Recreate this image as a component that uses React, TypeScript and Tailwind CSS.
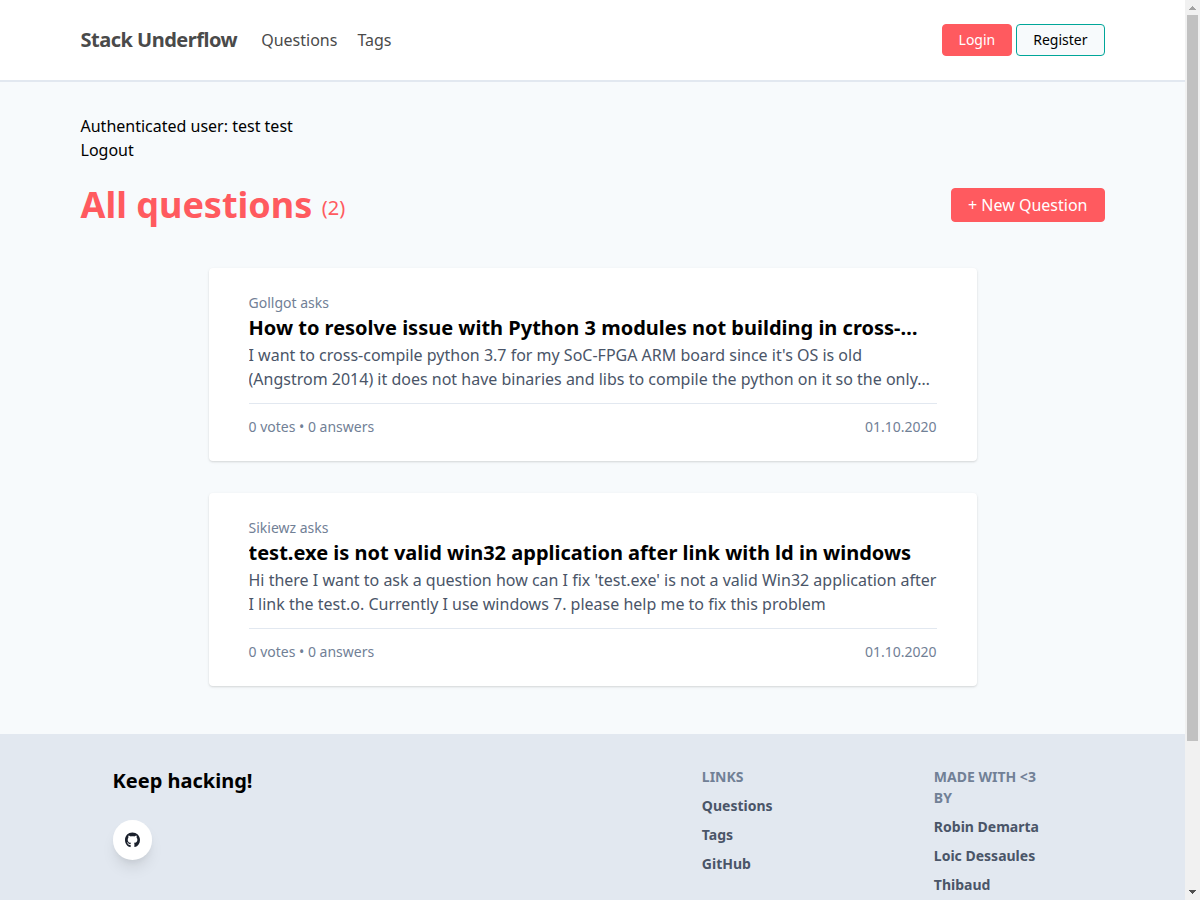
import { useState } from "react";
import type { UIEvent } from "react";
import { FaGithub } from "react-icons/fa";

type Question = {
  author: string;
  title: string;
  body: string;
  votes: number;
  answers: number;
  date: string;
};

const questions: Question[] = [
  {
    author: "Gollgot",
    title: "How to resolve issue with Python 3 modules not building in cross-…",
    body: "I want to cross-compile python 3.7 for my SoC-FPGA ARM board since it's OS is old (Angstrom 2014) it does not have binaries and libs to compile the python on it so the only…",
    votes: 0,
    answers: 0,
    date: "01.10.2020",
  },
  {
    author: "Sikiewz",
    title: "test.exe is not valid win32 application after link with ld in windows",
    body: "Hi there I want to ask a question how can I fix 'test.exe' is not a valid Win32 application after I link the test.o. Currently I use windows 7. please help me to fix this problem",
    votes: 0,
    answers: 0,
    date: "01.10.2020",
  },
];

function Header() {
  return (
    <header className="border-b-2 border-[#e2e8f0] bg-white">
      <nav className="mx-auto flex h-20 max-w-5xl items-center text-[#4a4a4a]">
        <a href="#" className="mr-6 text-xl font-bold tracking-tight">
          Stack Underflow
        </a>
        <div className="flex grow gap-5">
          <a href="#questions">Questions</a>
          <a href="#tags">Tags</a>
        </div>
        <div className="flex gap-1 text-sm leading-none">
          <a href="#login" className="rounded border border-[#ff5a5f] bg-[#ff5a5f] px-4 py-2 leading-none text-white">
            Login
          </a>
          <a href="#register" className="rounded border border-[#00a699] bg-[#f7fafc] px-4 py-2 leading-none text-black">
            Register
          </a>
        </div>
      </nav>
    </header>
  );
}

function QuestionCard({ question }: { question: Question }) {
  return (
    <article className="rounded bg-white px-10 py-6 shadow-[0_1px_3px_0_rgba(0,0,0,0.1),0_1px_2px_0_rgba(0,0,0,0.06)]">
      <p className="text-sm leading-[21px] text-[#718096]">{question.author} asks</p>
      <h2 className="line-clamp-1 text-xl leading-[30px] font-bold">{question.title}</h2>
      <p className="line-clamp-2 text-base text-[#4a5568]">{question.body}</p>
      <div className="mt-3 flex justify-between border-t border-[#e2e8f0] pt-3 text-sm leading-[21px] text-[#718096]">
        <span>
          {question.votes} votes • {question.answers} answers
        </span>
        <time>{question.date}</time>
      </div>
    </article>
  );
}

function FooterColumn({ title, items }: { title: string; items: string[] }) {
  return (
    <div className="ml-auto w-4/12 px-4 text-sm leading-[21px] font-bold">
      <h3 className="mb-2 text-[#718096] uppercase">{title}</h3>
      <ul>
        {items.map((item) => (
          <li key={item} className="pb-2">
            <a href="#" className="text-[#4a5568]">
              {item}
            </a>
          </li>
        ))}
      </ul>
    </div>
  );
}

function Footer() {
  return (
    <footer className="mt-12 bg-[#e2e8f0] pt-8 pb-6">
      <div className="mx-auto flex max-w-5xl px-4">
        <div className="w-6/12 px-4">
          <h2 className="text-xl leading-[30px] font-bold">Keep hacking!</h2>
          <a
            href="#github"
            aria-label="GitHub"
            className="mt-6 flex w-fit rounded-full bg-white p-3 text-[#1a202c] shadow-[0_10px_15px_-3px_rgba(0,0,0,0.1),0_4px_6px_-2px_rgba(0,0,0,0.05)]"
          >
            <FaGithub className="h-4 w-[15px]" />
          </a>
        </div>
        <div className="w-6/12 px-4">
          <div className="flex">
            <FooterColumn title="Links" items={["Questions", "Tags", "GitHub"]} />
            <FooterColumn title="Made with <3 by" items={["Robin Demarta", "Loic Dessaules", "Thibaud"]} />
          </div>
        </div>
      </div>
    </footer>
  );
}

function ScrollTrack({ progress }: { progress: number }) {
  return (
    <div aria-hidden="true" className="flex w-[15px] shrink-0 flex-col bg-[#f1f1f1]">
      <svg viewBox="0 0 15 15" className="h-[15px] w-[15px]" shapeRendering="crispEdges">
        <path d="M7 6h1v1h1v1h1v1h1v1H4V9h1V8h1V7h1z" fill="#a3a3a3" />
      </svg>
      <div className="flex grow flex-col px-0.5">
        <div style={{ flexGrow: progress }} />
        <div className="h-[83.5%] shrink-0 bg-[#c1c1c1]" />
        <div style={{ flexGrow: 1 - progress }} />
      </div>
      <svg viewBox="0 0 15 15" className="h-[15px] w-[15px]" shapeRendering="crispEdges">
        <path d="M4 5h7v1h-1v1H9v1H8v1H7V8H6V7H5V6H4z" fill="#505050" />
      </svg>
    </div>
  );
}

export default function App() {
  const [progress, setProgress] = useState(0);

  const handleScroll = (event: UIEvent<HTMLDivElement>) => {
    const { scrollTop, scrollHeight, clientHeight } = event.currentTarget;
    setProgress(scrollHeight > clientHeight ? scrollTop / (scrollHeight - clientHeight) : 0);
  };

  return (
    <div className="flex h-screen bg-[#f7fafc] font-['Noto_Sans',sans-serif] text-base text-black">
      <div onScroll={handleScroll} className="min-w-0 grow overflow-y-auto [scrollbar-width:none]">
        <Header />
        <main className="mx-auto max-w-5xl pt-8">
          <p>Authenticated user: test test</p>
          <a href="#logout" className="block">
            Logout
          </a>
          <div className="mt-4 flex items-center justify-between">
            <h1 className="text-4xl leading-[54px] font-bold text-[#ff5a5f]">
              All questions <span className="align-middle text-xl font-normal">({questions.length})</span>
            </h1>
            <a href="#new" className="rounded border border-[#ff5a5f] bg-[#ff5a5f] px-4 py-1 text-white">
              + New Question
            </a>
          </div>
          <div className="mx-auto mt-9 flex max-w-3xl flex-col gap-8">
            {questions.map((question) => (
              <QuestionCard key={question.title} question={question} />
            ))}
          </div>
        </main>
        <Footer />
      </div>
      <ScrollTrack progress={progress} />
    </div>
  );
}
